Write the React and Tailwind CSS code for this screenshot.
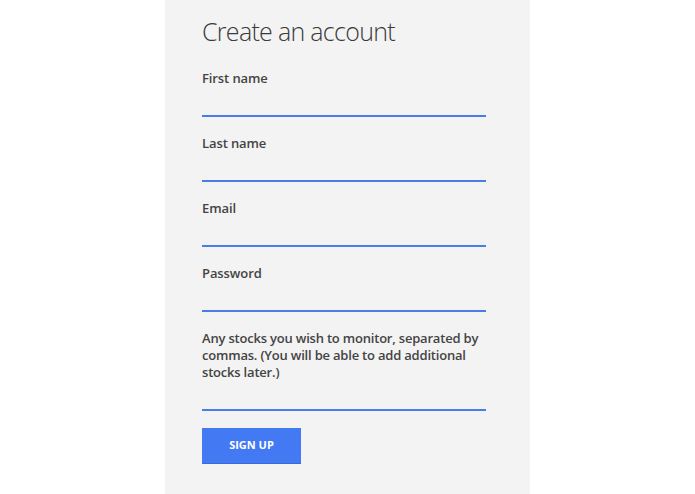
import React from 'react';

const fields = [
  { name: 'firstName', label: 'First name', type: 'text' },
  { name: 'lastName', label: 'Last name', type: 'text' },
  { name: 'email', label: 'Email', type: 'email' },
  { name: 'password', label: 'Password', type: 'password' },
];

const App = () => {
  return (
    <div className="min-h-screen bg-white" style={{ fontFamily: '"Open Sans", "Liberation Sans", sans-serif' }}>
      <div className="ml-[165px] w-[365px] min-h-[494px] bg-[#f3f3f3] pl-[37px] pr-[44px] pt-[16px] pb-[30px]">
        <h1 className="text-[25px] leading-[30px] font-light text-[#3a3a3a] tracking-[-0.7px]">Create an account</h1>

        <form className="mt-[22px]" onSubmit={(e) => e.preventDefault()}>
          {fields.map((f) => (
            <div key={f.name} className="mb-[16px]">
              <label className="block text-[13px] leading-[20px] font-semibold text-[#444] tracking-[-0.1px]">{f.label}</label>
              <input
                type={f.type}
                name={f.name}
                className="block w-full h-[29px] bg-transparent border-0 border-b-2 border-[#4a7de8] outline-none text-[13px] text-[#444]"
              />
            </div>
          ))}

          {/* Stocks field */}
          <div>
            <label className="block pt-[2px] text-[13px] leading-[17px] font-semibold text-[#444] tracking-[-0.2px]">
              Any stocks you wish to monitor, separated by commas. (You will be able to add additional stocks later.)
            </label>
            <input
              type="text"
              name="stocks"
              className="block w-full h-[30px] bg-transparent border-0 border-b-2 border-[#4a7de8] outline-none text-[13px] text-[#444]"
            />
          </div>

          <button
            type="submit"
            className="mt-[17px] w-[99px] h-[36px] bg-[#4479f4] border-b border-[#3a6ad8] text-white text-[11px] font-bold"
          >
            SIGN UP
          </button>
        </form>
      </div>
    </div>
  );
};

export default App;
